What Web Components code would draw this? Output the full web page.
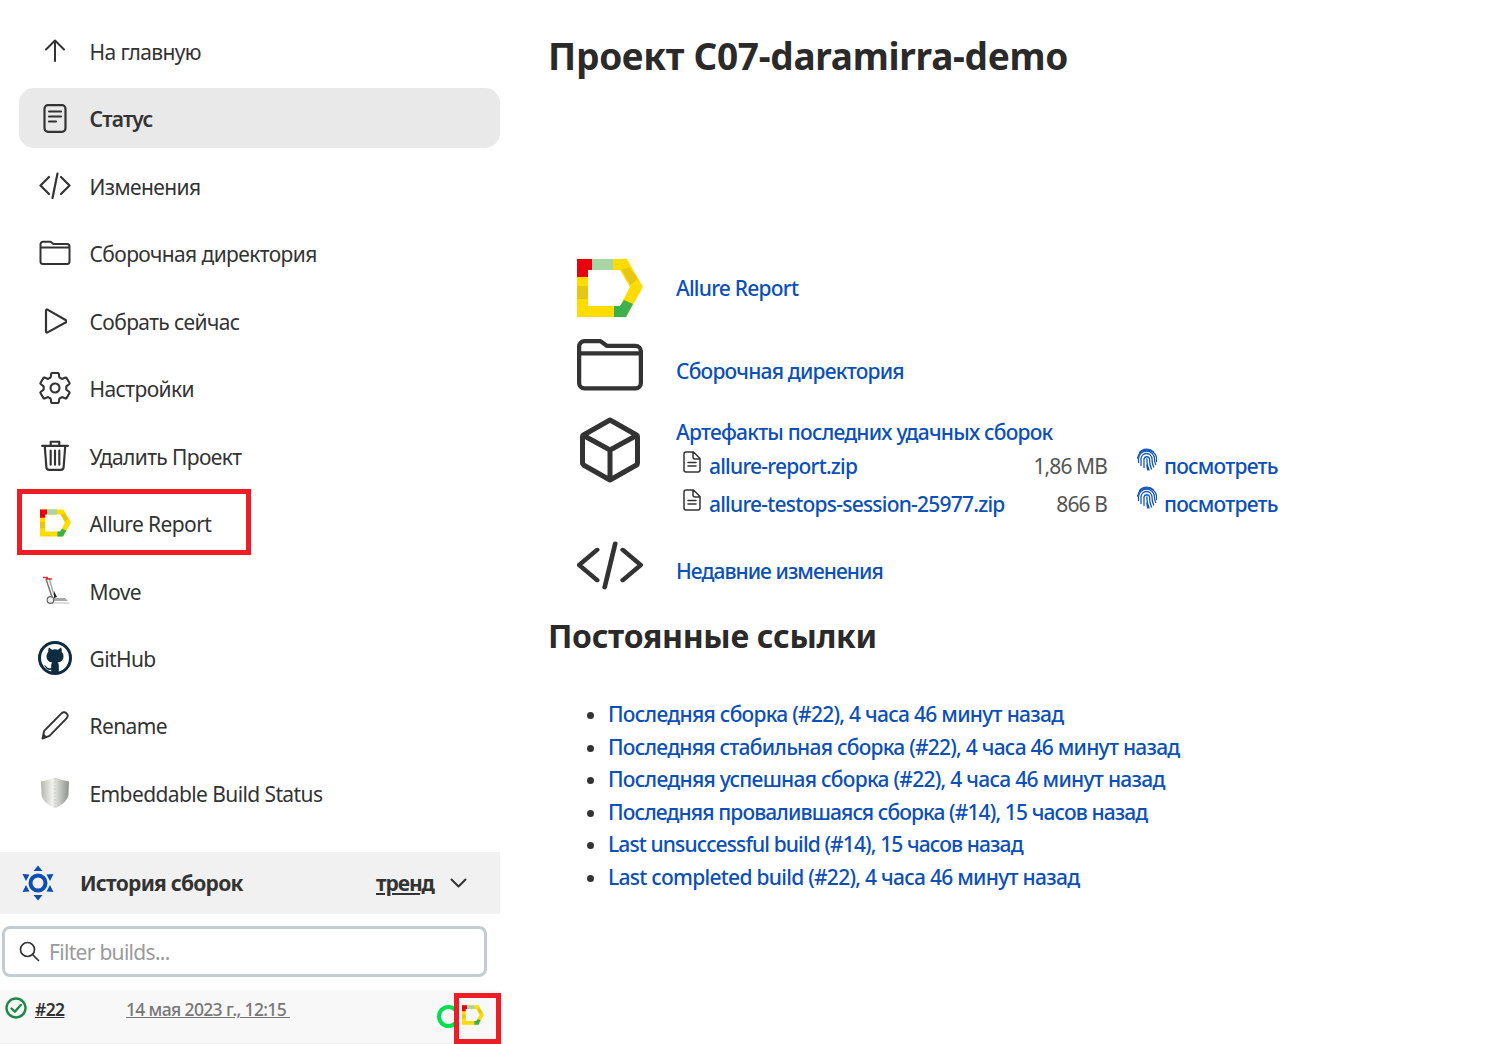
<!DOCTYPE html>
<html lang="ru">
<head>
<meta charset="utf-8">
<title>Проект C07-daramirra-demo</title>
<style>
  html, body { margin: 0; height: 100%; background: #fff; }
  body { font-family: "Noto Sans", "Open Sans", sans-serif; color: #333; overflow: hidden; }
</style>
</head>
<body>
<project-page></project-page>

<script>
const ICONS = {
    up: '<path d="M12 3v20M3 11.500 12 2.500l9 9" fill="none" stroke="#333" stroke-width="2" stroke-linecap="round" stroke-linejoin="round"/>',
    status: '<rect x="2.500" y="1.200" width="21" height="26.600" rx="3.500" fill="none" stroke="#333" stroke-width="2.200"/><path d="M7 7.500h12M7 12.500h12M7 17.500h7" stroke="#333" stroke-width="2.200" stroke-linecap="round"/>',
    code: '<path d="M10 6 1.500 14.500 10 23M22 6l8.500 8.500L22 23M18.500 2.500 13.500 27" fill="none" stroke="#333" stroke-width="2.200" stroke-linecap="round" stroke-linejoin="round"/>',
    folder: '<path d="M1.500 6V21.500a2.500 2.500 0 0 0 2.500 2.500h24a2.500 2.500 0 0 0 2.500-2.500V6.500A2.500 2.500 0 0 0 28 4H14.500L11.500 1.800H4A2.500 2.500 0 0 0 1.500 4.300V7.500H30.500" fill="none" stroke="#333" stroke-width="2" stroke-linejoin="round"/>',
    play: '<path d="M3 3.500v21a1 1 0 0 0 1.500.9L23 15.300a1.200 1.200 0 0 0 0-2L4.500 2.600A1 1 0 0 0 3 3.500z" fill="none" stroke="#333" stroke-width="2.200" stroke-linejoin="round"/>',
    gear: '<path d="M262.290 192.310a64 64 0 1057.400 57.400 64.130 64.130 0 00-57.400-57.400zM416.390 256a154.340 154.340 0 01-1.530 20.790l45.210 35.460a10.810 10.810 0 012.450 13.750l-42.770 74a10.810 10.810 0 01-13.140 4.590l-44.900-18.080a16.110 16.110 0 00-15.170 1.750A164.480 164.480 0 01325 400.800a15.940 15.940 0 00-8.820 12.140l-6.730 47.890a11.080 11.080 0 01-10.680 9.170h-85.540a11.110 11.110 0 01-10.690-8.870l-6.720-47.820a16.070 16.070 0 00-9-12.220 155.300 155.300 0 01-21.460-12.570 16 16 0 00-15.110-1.710l-44.890 18.070a10.810 10.810 0 01-13.140-4.580l-42.770-74a10.800 10.800 0 012.450-13.750l38.210-30a16.050 16.050 0 006-14.080c-.36-4.170-.58-8.330-.58-12.500s.21-8.270.58-12.350a16 16 0 00-6.070-13.940l-38.190-30A10.810 10.810 0 0149.480 186l42.770-74a10.810 10.810 0 0113.140-4.590l44.900 18.080a16.110 16.110 0 0015.170-1.750A164.480 164.480 0 01187 111.200a15.940 15.940 0 008.820-12.140l6.730-47.890A11.080 11.080 0 01213.230 42h85.540a11.110 11.110 0 0110.690 8.870l6.720 47.820a16.070 16.070 0 009 12.220 155.300 155.300 0 0121.460 12.570 16 16 0 0015.110 1.710l44.890-18.070a10.810 10.810 0 0113.140 4.580l42.770 74a10.800 10.800 0 01-2.450 13.750l-38.210 30a16.050 16.050 0 00-6.050 14.080c.33 4.140.55 8.300.55 12.470z" fill="none" stroke="#333" stroke-width="30" stroke-linejoin="round"/>',
    trash: '<path d="M1 6h24M9 5.500V2.200h8v3.300M3.500 6 5 26a2.500 2.500 0 0 0 2.500 2.300h11A2.500 2.500 0 0 0 21 26l1.500-20M9 10.500v13M13 10.500v13M17 10.500v13" fill="none" stroke="#333" stroke-width="2" stroke-linecap="round" stroke-linejoin="round"/>',
    pencil: '<path d="M2.500 28.500 4.200 20.800 21.500 3.300a3.500 3.500 0 0 1 5 0 3.600 3.600 0 0 1 0 5L9.500 25.800z" fill="none" stroke="#333" stroke-width="1.900" stroke-linejoin="round"/><path d="M2.500 28.500 3.600 23.500l3.500 3.500z" fill="#333"/>',
    cube: '<path d="M31 2.500 57.500 17.500a2 2 0 0 1 1 1.700v26.600a2 2 0 0 1-1 1.700L31 62.500 4.500 47.500a2 2 0 0 1-1-1.700V19.200a2 2 0 0 1 1-1.700zM4.500 18 31 32.500 57.500 18M31 32.500v30" fill="none" stroke="#333" stroke-width="5" stroke-linecap="round" stroke-linejoin="round"/>',
    file: '<path d="M3 1h7.500L17 7.500V19a2 2 0 0 1-2 2H3a2 2 0 0 1-2-2V3a2 2 0 0 1 2-2zM10 1.500V6a2 2 0 0 0 2 2h4.500M5 11.500h8M5 15h8" fill="none" stroke="#333" stroke-width="1.500" stroke-linecap="round" stroke-linejoin="round"/>',
    check: '<circle cx="11" cy="11" r="9.500" fill="none" stroke="#1c8a46" stroke-width="2.400"/><path d="M6.500 11.500 9.800 14.700 15.800 8" fill="none" stroke="#1c8a46" stroke-width="2.400" stroke-linecap="round" stroke-linejoin="round"/>',
    search: '<circle cx="8.500" cy="8.500" r="7" fill="none" stroke="#333" stroke-width="1.700"/><path d="M13.500 13.500 19.500 19.500" stroke="#333" stroke-width="1.700" stroke-linecap="round"/>',
    chevron: '<path d="M1.500 1.500 8.500 8.500 15.500 1.500" fill="none" stroke="#333" stroke-width="2" stroke-linecap="round" stroke-linejoin="round"/>',
    sun: '<circle cx="17" cy="19" r="7.500" fill="none" stroke="#0b4fb4" stroke-width="4"/><path d="M17 1.500 21.500 7h-9zM17 36.500 12.500 31h9zM1.500 10l7 .5-3.500 6.500zM32.500 10l-7 .5 3.500 6.500zM1.500 28l7-.5-3.500-6.500zM32.500 28l-7-.5 3.500-6.500z" fill="#0b4fb4"/>',
    print: '<g fill="none" stroke="#1557b8" stroke-width="1.300" stroke-linecap="round"><path d="M3.500 5.500A9.500 9.500 0 0 1 17.500 5"/><path d="M1.500 11a9.700 9.700 0 0 1 19-.5c.2 1.500.2 3 0 4"/><path d="M2.500 15.500V12a8 8 0 0 1 16 0c0 2 .6 4 1.200 5.500"/><path d="M5 18.500V12a5.500 5.500 0 0 1 11 0c0 3 .6 6 1.700 8"/><path d="M8 20.500V12a2.800 2.800 0 0 1 5.500 0c0 4 .8 7.500 2 10"/><path d="M10.800 12c0 4 .8 8 2.300 11M10.800 18c.2 2 .6 4 1 5"/></g>',
    github: '<circle cx="17" cy="17" r="15.500" fill="#fff" stroke="#0f2b40" stroke-width="3"/><path d="M11 6.500l3 2.300a11 11 0 0 1 6 0l3-2.300c.8 1.500.9 3 .6 4.200 1.200 1.300 1.900 2.800 1.900 4.500 0 4-2.600 5.800-5.900 6.300.8.700 1.200 1.800 1.200 3V32h-7.600v-3.200c-2.700.5-4.500-.2-5.500-2.300-.5-1-1.200-1.700-2.200-2.200 1.600-.2 2.800.8 3.500 2 .8 1.200 2.300 1.300 4.200.7V24.600c0-1.200.4-2.300 1.200-3-3.300-.5-5.900-2.300-5.900-6.300 0-1.700.7-3.300 1.900-4.600-.3-1.200-.2-2.700.6-4.200z" fill="#0f2b40"/>',
    cart: '<path d="M6 3 12 21" stroke="#777" stroke-width="1.500"/><path d="M9 2 14 19" stroke="#a9a9a9" stroke-width="1.500"/><path d="M3 1.500h5M6 3h6" stroke="#d8342c" stroke-width="1.300"/><path d="M13 22h12l3 3H13z" fill="#a8a8a8"/><path d="M10 26h18l3 2H10z" fill="#dedede"/><path d="M14 15l3 6-3 1z" fill="#222"/><circle cx="10.500" cy="24" r="3.300" fill="#eee" stroke="#666" stroke-width="1.200"/>',
    shield: '<defs><linearGradient id="sg" x1="0" x2="1"><stop offset="0" stop-color="#b3b5af"/><stop offset=".4" stop-color="#f1f2ee"/><stop offset="1" stop-color="#8f928c"/></linearGradient></defs><path d="M15 .500 22 3l7 1.500-.5 13C28 23 22 28.500 15 31 8 28.500 2 23 1.500 17.500L1 4.500 8 3z" fill="url(#sg)"/><path d="M15 1v29" stroke="#c9cac6" stroke-dasharray="1.500 2"/>'
};

function svgIcon(name, w, h, vw, vh) {
    return `<svg width="${w}" height="${h}" viewBox="0 0 ${vw || w} ${vh || h}" aria-hidden="true">${ICONS[name]}</svg>`;
}

class AllureLogo extends HTMLElement {
    constructor() {
        super();
        this.attachShadow({ mode: 'open' });
    }

    connectedCallback() {
        const w = this.getAttribute('width') || 66;
        const h = this.getAttribute('height') || 58;
        this.shadowRoot.innerHTML = `
            <style>:host { display: inline-flex; line-height: 0; }</style>
            <svg width="${w}" height="${h}" viewBox="0 0 66 58" aria-hidden="true">
                <path d="M0 0H50L66 28 49 58H0zM11 11V47H43L53 28 43 11z" fill="#ffdc00" fill-rule="evenodd"/>
                <path d="M0 0H15V11H11V18H0z" fill="#e8000f"/>
                <path d="M15 0H36V11H15z" fill="#a8d5a6"/>
                <path d="M0 27H11V40H0z" fill="#e5c612"/>
                <path d="M45 11 52 8 61 20 53 26z" fill="#e5c612"/>
                <path d="M37 47H43L47 41 56 45 49 58H37z" fill="#3cb04c"/>
            </svg>`;
    }
}

class SideItem extends HTMLElement {
    constructor() {
        super();
        this.attachShadow({ mode: 'open' });
    }

    connectedCallback() {
        this.shadowRoot.innerHTML = `
            <style>
                :host {
                    display: flex;
                    align-items: center;
                    height: 60px;
                    margin-bottom: 7.450px;
                    margin-left: 19px;
                    width: 481px;
                    border-radius: 15px;
                    font-size: 21px;
                    letter-spacing: -0.6px;
                    color: #333;
                    box-sizing: border-box;
                }
                :host([active]) { background: #e9e9e9; font-weight: 600; letter-spacing: -0.8px; }
                .icon {
                    width: 36px;
                    margin-left: 18px;
                    margin-right: 16.500px;
                    display: flex;
                    justify-content: center;
                    align-items: center;
                    line-height: 0;
                }
                .text { padding-top: 2px; }
            </style>
            <span class="icon"><slot name="icon"></slot></span>
            <span class="text"><slot></slot></span>`;
    }
}

class BuildHistory extends HTMLElement {
    constructor() {
        super();
        this.attachShadow({ mode: 'open' });
    }

    connectedCallback() {
        this.shadowRoot.innerHTML = `
            <style>
                :host { display: block; width: 500px; color: #333; }
                .head {
                    display: flex;
                    align-items: center;
                    height: 62px;
                    background: #f1f1f1;
                    padding-left: 21px;
                    box-sizing: border-box;
                }
                .head .title { font-size: 21px; font-weight: 700; letter-spacing: -0.75px; margin-left: 25px; width: 296px; }
                .head .trend { font-size: 21px; font-weight: 700; letter-spacing: -1.1px; text-decoration: underline; width: 74px; }
                .filter {
                    display: flex;
                    align-items: center;
                    gap: 9px;
                    height: 51px;
                    width: 485px;
                    margin: 12px 0 13px 2px;
                    padding-left: 14px;
                    box-sizing: border-box;
                    border: 3px solid #c3ccd1;
                    border-radius: 8px;
                    font-size: 21px;
                    letter-spacing: -0.7px;
                    color: #9a9a9a;
                }
                .build {
                    display: flex;
                    align-items: flex-start;
                    height: 54px;
                    background: #f8f8f8;
                    border-bottom: 1px solid #ececec;
                    box-sizing: border-box;
                    padding: 7px 0 0 5px;
                    font-size: 17.500px;
                    letter-spacing: -0.65px;
                }
                .num { font-weight: 600; text-decoration: underline; margin-left: 8px; width: 91px; line-height: 25px; }
                .date { color: #777; text-decoration: underline; width: 311px; line-height: 25px; font-weight: 500; }
                .ring {
                    width: 23px;
                    height: 23px;
                    margin-top: 8px;
                    margin-right: 2px;
                    box-sizing: border-box;
                    border: 4.500px solid #00e04f;
                    border-right-color: transparent;
                    border-radius: 50%;
                }
                allure-logo { margin-top: 8px; }
            </style>
            <div class="head">
                ${svgIcon('sun', 34, 38)}
                <span class="title">История сборок</span>
                <span class="trend">тренд</span>
                ${svgIcon('chevron', 17, 10)}
            </div>
            <div class="filter">${svgIcon('search', 21, 21)}<span>Filter builds...</span></div>
            <div class="build">
                ${svgIcon('check', 22, 22)}
                <span class="num">#22</span>
                <span class="date">14 мая 2023 г., 12:15&nbsp;</span>
                <span class="ring"></span>
                <allure-logo width="22" height="20"></allure-logo>
            </div>`;
    }
}

class LinkRow extends HTMLElement {
    constructor() {
        super();
        this.attachShadow({ mode: 'open' });
    }

    connectedCallback() {
        const h = this.getAttribute('height');
        this.shadowRoot.innerHTML = `
            <style>
                :host {
                    display: flex;
                    align-items: var(--row-align, center);
                    height: ${h}px;
                    font-size: 21px;
                    letter-spacing: -0.78px;
                    color: #0b4fb8;
                    font-weight: 500;
                }
                .icon { width: 127px; padding-left: 28px; box-sizing: border-box; flex: none; line-height: 0; display: flex; }
                .body { flex: 1; min-width: 0; }
            </style>
            <span class="icon"><slot name="icon"></slot></span>
            <div class="body"><slot></slot></div>`;
    }
}

class ArtifactRow extends HTMLElement {
    constructor() {
        super();
        this.attachShadow({ mode: 'open' });
    }

    connectedCallback() {
        this.shadowRoot.innerHTML = `
            <style>
                :host {
                    display: flex;
                    align-items: center;
                    height: 38px;
                    padding-left: 7px;
                    font-size: 21px;
                    letter-spacing: -0.78px;
                    color: #0b4fb8;
                    font-weight: 500;
                    white-space: nowrap;
                }
                .file { line-height: 0; margin-right: 8px; position: relative; top: -4px; }
                .name { width: 295px; }
                .size { width: 103px; text-align: right; color: #555; font-weight: 400; letter-spacing: -0.9px; }
                .print { line-height: 0; margin-left: 29px; margin-right: 7px; position: relative; top: -7px; }
            </style>
            <span class="file">${svgIcon('file', 18, 22)}</span>
            <span class="name">${this.getAttribute('name')}</span>
            <span class="size">${this.getAttribute('size')}</span>
            <span class="print">${svgIcon('print', 21, 24)}</span>
            <span>посмотреть</span>`;
    }
}

class PermaLinks extends HTMLElement {
    constructor() {
        super();
        this.attachShadow({ mode: 'open' });
    }

    connectedCallback() {
        this.shadowRoot.innerHTML = `
            <style>
                :host { display: block; font-size: 21px; letter-spacing: -0.72px; color: #0b4fb8; font-weight: 500; }
                ul { margin: 0; padding: 0 0 0 59px; }
                li { line-height: 32.600px; }
                li:nth-child(2) { letter-spacing: -0.75px; }
                li:nth-child(4), li:nth-child(5) { letter-spacing: -0.88px; }
                li::marker { color: #333; }
            </style>
            <ul>
                <li>Последняя сборка (#22), 4 часа 46 минут назад</li>
                <li>Последняя стабильная сборка (#22), 4 часа 46 минут назад</li>
                <li>Последняя успешная сборка (#22), 4 часа 46 минут назад</li>
                <li>Последняя провалившаяся сборка (#14), 15 часов назад</li>
                <li>Last unsuccessful build (#14), 15 часов назад</li>
                <li>Last completed build (#22), 4 часа 46 минут назад</li>
            </ul>`;
    }
}

class ProjectMain extends HTMLElement {
    constructor() {
        super();
        this.attachShadow({ mode: 'open' });
    }

    connectedCallback() {
        this.shadowRoot.innerHTML = `
            <style>
                :host { display: block; flex: 1; padding-left: 49px; color: #2a2a2a; }
                h1 { margin: 0 0 0 -1px; padding-top: 30px; font-size: 37px; line-height: 52px; font-weight: 700; letter-spacing: -0.27px; height: 248px; box-sizing: border-box; }
                h2 { margin: 0 0 0 -1px; font-size: 32px; line-height: 46px; font-weight: 700; letter-spacing: -0.3px; height: 85px; box-sizing: border-box; }
                .art { --row-align: flex-start; }
                .up { margin-bottom: 12px; }
                .up-folder { margin-bottom: 16px; }
                .lift { margin-bottom: 5px; }
                .art-title { margin-bottom: 1px; }
                .cube { margin: -1px 0 0 2px; }
            </style>
            <h1>Проект C07-daramirra-demo</h1>
            <div class="table">
                <link-row height="80"><allure-logo slot="icon"></allure-logo>Allure Report</link-row>
                <link-row height="90"><svg slot="icon" class="up-folder" width="66" height="54" viewBox="0.500 1 31 24">${ICONS.folder}</svg><div class="lift">Сборочная директория</div></link-row>
                <link-row height="110" class="art">
                    <svg slot="icon" class="cube" width="62" height="66" viewBox="0 0 62 65">${ICONS.cube}</svg>
                    <div class="art-title">Артефакты последних удачных сборок</div>
                    <artifact-row name="allure-report.zip" size="1,86 MB"></artifact-row>
                    <artifact-row name="allure-testops-session-25977.zip" size="866 B"></artifact-row>
                </link-row>
                <link-row height="85"><svg slot="icon" class="up" width="68" height="52" viewBox="0.500 0 32 29" preserveAspectRatio="none">${ICONS.code}</svg><div style="letter-spacing:-0.95px">Недавние изменения</div></link-row>
            </div>
            <h2>Постоянные ссылки</h2>
            <perma-links></perma-links>`;
    }
}

class AnnotationBox extends HTMLElement {
    constructor() {
        super();
        this.attachShadow({ mode: 'open' });
    }

    connectedCallback() {
        this.shadowRoot.innerHTML = `
            <style>
                :host { position: absolute; display: block; box-sizing: border-box; border: 5px solid #ee1c25; pointer-events: none; }
            </style>`;
    }
}

class ProjectPage extends HTMLElement {
    constructor() {
        super();
        this.attachShadow({ mode: 'open' });
    }

    connectedCallback() {
        this.shadowRoot.innerHTML = `
            <style>
                :host { display: flex; position: relative; width: 1509px; height: 1044px; overflow: hidden; }
                .side { width: 500px; flex: none; padding-top: 21px; box-sizing: border-box; }
                build-history { margin-top: 29.500px; }
            </style>
            <div class="side">
                <side-item><span slot="icon">${svgIcon('up', 24, 26)}</span>На главную</side-item>
                <side-item active><span slot="icon">${svgIcon('status', 26, 29)}</span>Статус</side-item>
                <side-item><span slot="icon">${svgIcon('code', 32, 29)}</span>Изменения</side-item>
                <side-item><span slot="icon">${svgIcon('folder', 32, 26)}</span>Сборочная директория</side-item>
                <side-item><span slot="icon">${svgIcon('play', 24, 28)}</span>Собрать сейчас</side-item>
                <side-item><span slot="icon"><svg width="36" height="36" viewBox="0 0 512 512">${ICONS.gear}</svg></span>Настройки</side-item>
                <side-item><span slot="icon"><svg width="28" height="33" viewBox="0 0 26 30">${ICONS.trash}</svg></span>Удалить Проект</side-item>
                <side-item><allure-logo slot="icon" width="31" height="28"></allure-logo>Allure Report</side-item>
                <side-item><span slot="icon">${svgIcon('cart', 30, 30)}</span>Move</side-item>
                <side-item><span slot="icon">${svgIcon('github', 34, 34)}</span>GitHub</side-item>
                <side-item><span slot="icon">${svgIcon('pencil', 30, 30)}</span>Rename</side-item>
                <side-item><span slot="icon">${svgIcon('shield', 30, 31)}</span>Embeddable Build Status</side-item>
                <build-history></build-history>
            </div>
            <project-main></project-main>
            <annotation-box style="left:17px;top:489px;width:234px;height:66px"></annotation-box>
            <annotation-box style="left:454px;top:993px;width:47px;height:51px"></annotation-box>`;
    }
}

customElements.define('allure-logo', AllureLogo);
customElements.define('side-item', SideItem);
customElements.define('build-history', BuildHistory);
customElements.define('link-row', LinkRow);
customElements.define('artifact-row', ArtifactRow);
customElements.define('perma-links', PermaLinks);
customElements.define('project-main', ProjectMain);
customElements.define('annotation-box', AnnotationBox);
customElements.define('project-page', ProjectPage);
</script>
</body>
</html>
